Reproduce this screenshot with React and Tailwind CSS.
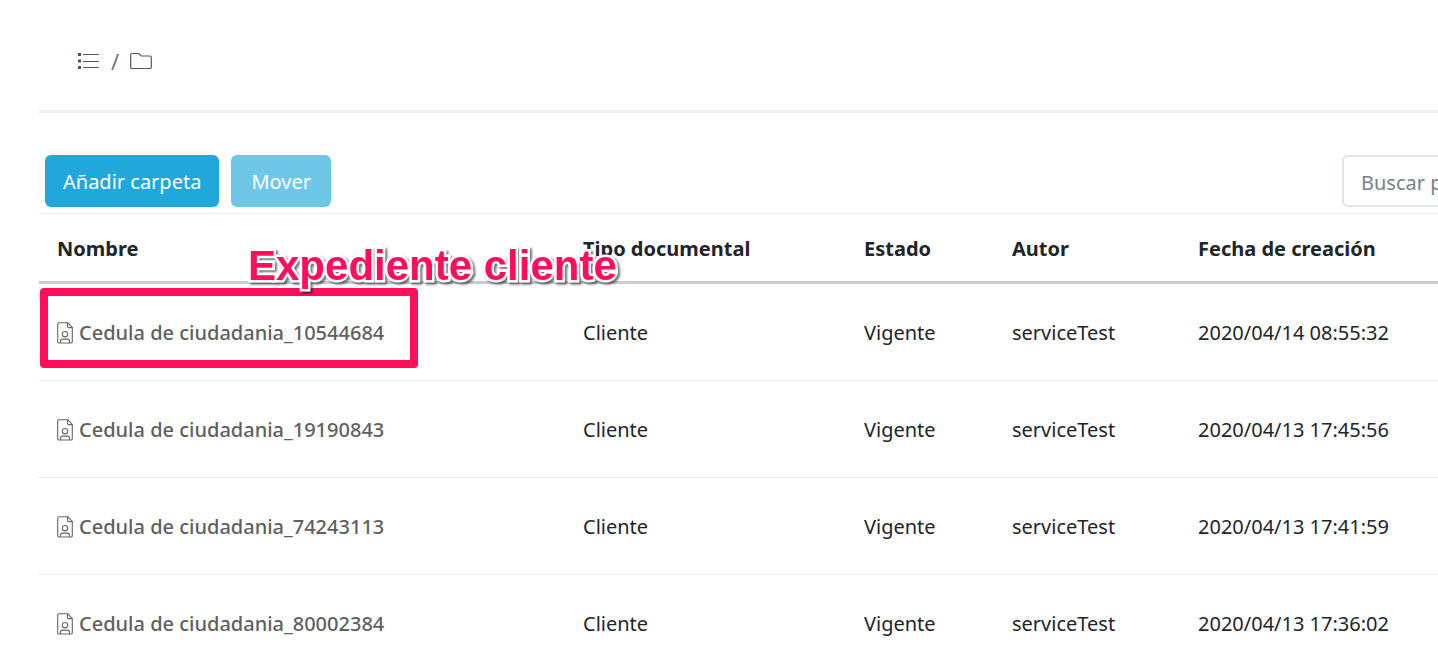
import React from 'react';

const rows = [
  { name: 'Cedula de ciudadania_10544684', date: '2020/04/14 08:55:32' },
  { name: 'Cedula de ciudadania_19190843', date: '2020/04/13 17:45:56' },
  { name: 'Cedula de ciudadania_74243113', date: '2020/04/13 17:41:59' },
  { name: 'Cedula de ciudadania_80002384', date: '2020/04/13 17:36:02' },
];

function ListIcon() {
  return (
    <svg width="22" height="18" viewBox="0 0 22 18" fill="none" aria-hidden="true">
      <path d="M0 1h3v3H0zM0 7.500h3v3H0zM0 14h3v3H0z" fill="#5c4a6b" />
      <path d="M5 2.500h16M5 9.500h16M5 15.500h16" stroke="#555" strokeWidth="1" />
    </svg>
  );
}

function FolderIcon() {
  return (
    <svg width="22" height="18" viewBox="0 0 22 18" fill="none" stroke="#555" strokeWidth="1.2" aria-hidden="true">
      <path d="M2 1.500h6.200c.6 0 .9.200 1.300.600l1.400 1.600c.2.200.4.300.7.300H20c.8 0 1.300.5 1.300 1.300v9.900c0 .8-.5 1.300-1.300 1.300H2c-.8 0-1.300-.5-1.300-1.300V2.800c0-.8.5-1.300 1.300-1.300z" />
    </svg>
  );
}

function IdFileIcon() {
  return (
    <svg className="shrink-0" width="16" height="22" viewBox="0 0 16 22" fill="none" stroke="#666" strokeWidth="1.1" aria-hidden="true">
      <path d="M2 .8h8.800l4.500 4.600v14.300c0 .8-.5 1.300-1.300 1.300H2c-.8 0-1.300-.5-1.300-1.300V2.100C.7 1.300 1.200.8 2 .8z" />
      <path d="M10.500.8v3.600c0 .8.4 1.200 1.200 1.200h3.600" />
      <circle cx="8" cy="12.200" r="2.700" />
      <path d="M3.500 21v-1.800c0-1.300.8-2.100 2.100-2.100h4.800c1.300 0 2.100.8 2.100 2.100V21" />
    </svg>
  );
}

export default function App() {
  return (
    <main className="h-screen overflow-hidden bg-white pl-[39px] font-['Noto_Sans','Open_Sans',sans-serif] text-xl text-[#212529]">
      <nav aria-label="Ruta" className="flex h-[113px] items-center gap-[11px] border-b-3 border-[#eee] pt-3 pl-[39px] text-[#6c757d]">
        <a href="#lista" aria-label="Lista"><ListIcon /></a>
        <span className="text-[22px]">/</span>
        <a href="#carpeta" aria-label="Carpeta"><FolderIcon /></a>
      </nav>

      <div className="flex w-[calc(100%+200px)] items-start justify-between pt-[42px] pb-[6px] pl-[6px]">
        <div className="flex gap-3">
          <button type="button" className="h-[52px] rounded-md bg-[#21a8da] px-[18px] pt-[2px] text-white">Añadir carpeta</button>
          <button type="button" disabled className="h-[52px] rounded-md bg-[#6ec7e6] px-5 pt-[2px] text-white">Mover</button>
        </div>
        <input type="search" aria-label="Buscar por nombre" placeholder="Buscar por nombre" className="h-[52px] w-[296px] rounded-md border-2 border-[#e1e6ea] px-[17px] pt-[2px] placeholder:text-[#77818b]" />
      </div>

      <div className="relative">
        <table className="w-full table-fixed border-separate border-spacing-0 text-left whitespace-nowrap">
          <colgroup>
            <col className="w-[526px]" />
            <col className="w-[281px]" />
            <col className="w-[148px]" />
            <col className="w-[186px]" />
            <col />
          </colgroup>
          <thead>
            <tr className="h-[71px] font-bold">
              {['Nombre', 'Tipo documental', 'Estado', 'Autor', 'Fecha de creación'].map((h) => (
                <th key={h} scope="col" className="border-t border-b-3 border-t-[#eceeef] border-b-[#c8cdd2] px-[18px] pt-[2px]">{h}</th>
              ))}
            </tr>
          </thead>
          <tbody>
            {rows.map((r) => (
              <tr key={r.name} className="h-[97px]">
                <td className="border-b border-[#e9ecef] px-[18px] pt-[2px]">
                  <a href="#documento" className="flex items-center gap-[6px] font-medium text-[#5f5f5f]">
                    <IdFileIcon />
                    {r.name}
                  </a>
                </td>
                <td className="border-b border-[#e9ecef] px-[18px] pt-[2px]">Cliente</td>
                <td className="border-b border-[#e9ecef] px-[18px] pt-[2px]">Vigente</td>
                <td className="border-b border-[#e9ecef] px-[18px] pt-[2px]">serviceTest</td>
                <td className="border-b border-[#e9ecef] px-[18px] pt-[2px]">{r.date}</td>
              </tr>
            ))}
          </tbody>
        </table>
        <div className="pointer-events-none absolute top-[75px] left-px h-20 w-[378px] rounded-sm border-8 border-[#ff0f5b]" />
        <p className="pointer-events-none absolute top-[29px] left-[209px] font-['Liberation_Sans',Arial,sans-serif] text-[42px] leading-12 font-bold whitespace-nowrap text-[#ff0f5b] [paint-order:stroke_fill] [-webkit-text-stroke:5px_white] [filter:drop-shadow(2px_2px_1px_rgba(0,0,0,0.55))]">
          Expediente cliente
        </p>
      </div>
    </main>
  );
}
